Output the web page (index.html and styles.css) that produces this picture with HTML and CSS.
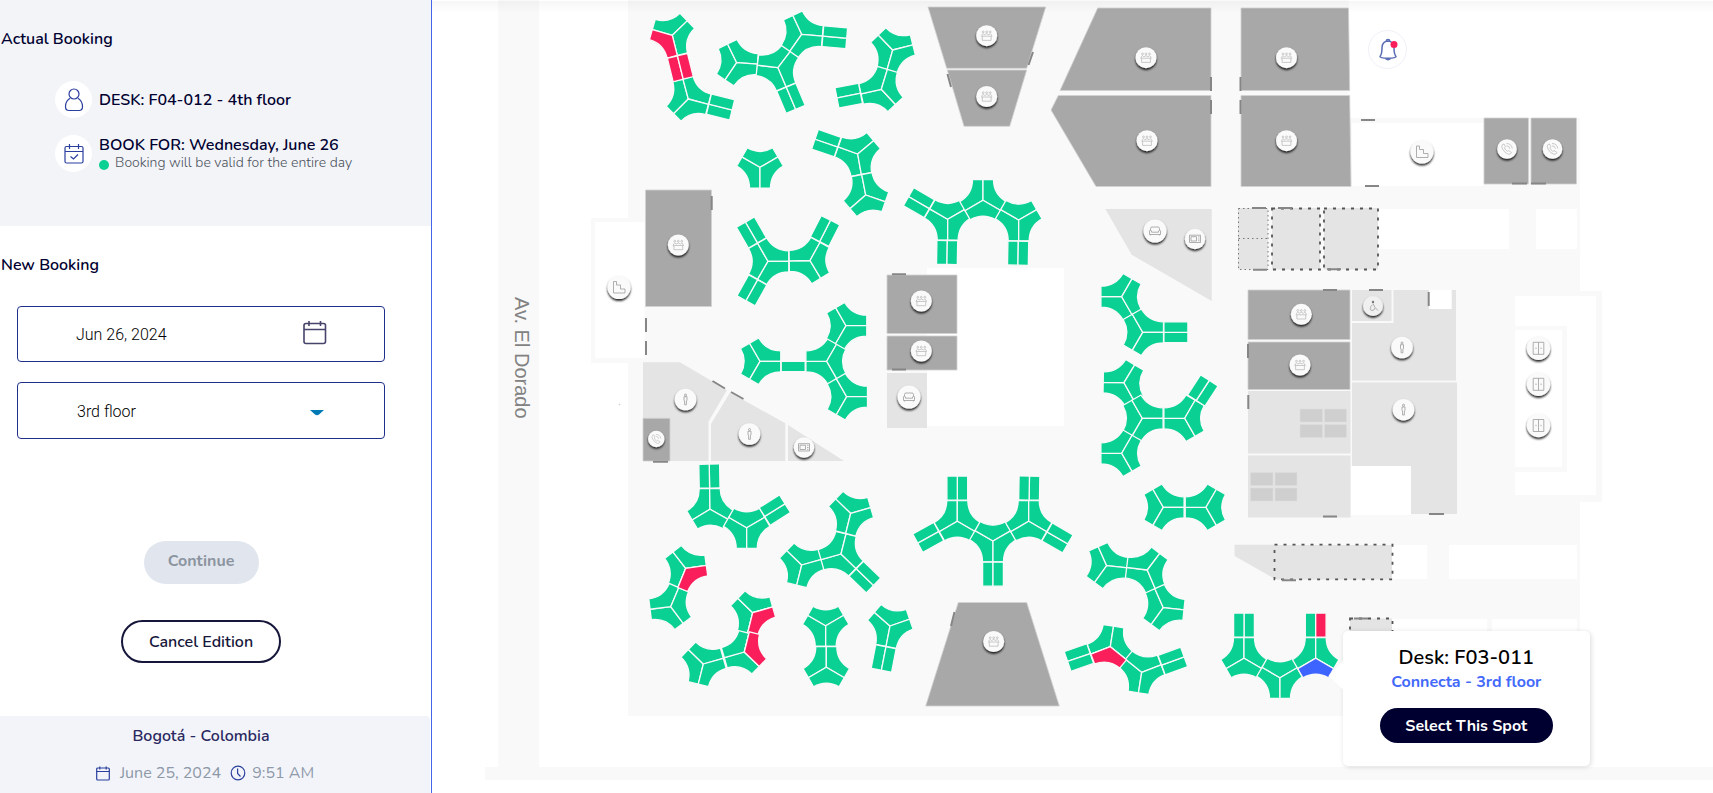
FILE: index.html
```html
<!DOCTYPE html>
<html lang="en">
<head>
<meta charset="utf-8">
<title>Edit booking</title>
<link rel="stylesheet" href="styles.css">
</head>
<body>
<div class="app">
  <aside class="sidebar">
    <section class="actual">
      <h2 class="heading">Actual Booking</h2>
      <div class="info">
        <span class="badge">
          <svg width="20" height="24" viewBox="0 0 20 24" class="line"><circle cx="10" cy="6" r="5"/><path d="M6 10.200C3 12 1.500 14.500 1.500 18.500C1.500 21.500 2.500 22.500 5 22.500H15C17.500 22.500 18.500 21.500 18.500 18.500C18.500 14.500 17 12 14 10.200"/></svg>
        </span>
        <p class="info-title">DESK: F04-012 - 4th floor</p>
      </div>
      <div class="info">
        <span class="badge">
          <svg width="20" height="20" viewBox="0 0 20 20" class="line"><rect x="1" y="2.500" width="18" height="16.500" rx="1.500"/><path d="M1 7.500H19M5.500 0V5M14.500 0V5M6.500 12.500L9.500 15L14 10.500"/></svg>
        </span>
        <div>
          <p class="info-title">BOOK FOR: Wednesday, June 26</p>
          <p class="info-note"><i class="dot"></i>Booking will be valid for the entire day</p>
        </div>
      </div>
    </section>
    <section class="new">
      <h2 class="heading">New Booking</h2>
      <label class="field">
        <input class="control" type="text" value="Jun 26, 2024" aria-label="Date">
        <svg class="field-icon" width="24" height="24" viewBox="0 0 24 24"><rect x="1" y="2.500" width="21.500" height="20" rx="2"/><path d="M1 8.500H22.500M6 0V5M17.500 0V5"/></svg>
      </label>
      <label class="field">
        <select class="control" aria-label="Floor"><option>3rd floor</option></select>
        <svg class="field-arrow" width="14" height="6" viewBox="0 0 14 6"><path d="M0 0H14L9 4.500Q7 6 5 4.500Z"/></svg>
      </label>
      <div class="actions">
        <button class="btn btn-disabled" type="button" disabled>Continue</button>
        <button class="btn btn-outline" type="button">Cancel Edition</button>
      </div>
    </section>
    <footer class="footer">
      <p class="city">Bogotá - Colombia</p>
      <p class="when">
        <svg width="14" height="15" viewBox="0 0 14 15" class="line"><rect x=".7" y="2" width="12.600" height="12" rx="1"/><path d="M.7 5.500H13.300M3.800 0.500V3.500M10.200 .5V3.500"/></svg>
        <span class="date">June 25, 2024</span>
        <svg width="16" height="16" viewBox="0 0 16 16" class="line"><circle cx="8" cy="8" r="6.800"/><path d="M7.600 3.500V8.500L10.500 11.500"/></svg>
        <span>9:51 AM</span>
      </p>
    </footer>
  </aside>

  <main class="map">
    <svg class="plan" viewBox="432 0 1281 793">
      <defs>
        <filter id="lift" x="-40%" y="-40%" width="180%" height="190%"><feDropShadow dx="0" dy="1.800" stdDeviation="1.200" flood-color="#000" flood-opacity=".9"/></filter>
        <linearGradient id="fade" x1="0" y1="0" x2="0" y2="1"><stop offset="0" stop-opacity=".035"/><stop offset="1" stop-opacity="0"/></linearGradient>
        <path id="w" d="M0 0V20.800H-10.500Q-10.500 6.060 -23.260 -1.310L-18.010 -10.400Z"/>
        <g id="h"><use href="#w"/><use href="#w" transform="rotate(120)"/><use href="#w" transform="rotate(240)"/></g>
        <path id="s" d="M-10.400 21.200H0V45.200H-10.400Z"/>
        <g id="b"><use href="#s"/><path d="M0 21.200H10.400V45.200H0Z"/></g>
        <g id="meet"><circle class="pin" r="10.500"/><g class="ink"><circle cx="-3.500" cy="-3.800" r=".9"/><circle cy="-3.800" r=".9"/><circle cx="3.500" cy="-3.800" r=".9"/><path d="M-4.800 0V-1Q-3.500 -3 -2.200 -1Q0 -3 2.200 -1Q3.500 -3 4.800 -1V0M-5.600 .5H5.600M-4.400 .5V4.700H4.400V.5"/></g></g>
        <g id="stairs"><circle class="pin" r="11.500"/><path class="ink dark" d="M-5.500 -6H-2.500V-2.500H1.500V1.500H6V5.500H-5.500Z"/></g>
        <g id="phone"><circle class="pin" r="9.800"/><path class="ink" d="M-4.500 -4.500Q-6 -3 -4.500 0Q-2 4.500 1.500 5.300Q3.500 5.500 4.500 3.500L1.500 1.500L.3 2.500Q-1.800 1 -2.600 -1.200L-1.500 -2.200L-3 -5ZM-.5 -5.500Q4.500 -5.500 5.300 -.5M-.5 -3.200Q2.500 -3 3 -.2"/></g>
        <g id="sofa"><circle class="pin" r="11.500"/><path class="ink dark" d="M-4.500 -.8V-2.500Q-4.500 -4 -3 -4H3Q4.500 -4 4.500 -2.500V-.8M-3.500 1.200V0Q-4 -1 -5 -.8Q-6.200 -.3 -5.500 1V3.500H5.500V1Q6.200 -.3 5 -.8Q4 -1 3.500 0V1.200ZM-4.500 3.500V4.500M4.500 3.500V4.500"/></g>
        <g id="micro"><circle class="pin" r="10.200"/><path class="ink dark" d="M-5.500 -3.800H5.500V3.500H-5.500ZM-4 -2.300H1.500V2H-4ZM3 -2.200H4.500M3 0H4.500M3 1.800H4.500"/></g>
        <g id="wc"><circle class="pin" r="10.800"/><path class="ink dark" d="M0 -5.500A1 1 0 1 1 0 -3.500A1 1 0 1 1 0 -5.500M-1.500 -2.800H1.500V1L.9 1.300V5.300H-.9V1.300L-1.500 1Z"/></g>
        <g id="access"><circle class="pin grey" r="10"/><circle cy="-4" r="1.200" fill="#777"/><path class="ink dark" d="M0 -2.500L2 1.500L5 4.500M-.5 -1L-2.500 .5M-2 1Q-4 4 -1 4.500Q1.500 4.500 2 2"/></g>
        <g id="elev"><circle class="pin" r="11.700"/><path class="ink dark" d="M-5.300 -6H5.300V6H-5.300ZM0 -6V6M-2.500 -.7V.7M2.500 -.7V.7"/></g>
      </defs>

      <!-- ground -->
      <path class="floor" d="M498 0H539V767H1713V780H485V767H498Z"/>
      <path class="floor" d="M628 0H1349V118H1580V291H1602V502H1580V716H628ZM591 218H645V363H591Z"/>
      <path class="void" d="M595 222H644.500V358H595ZM927 268H1064V426H927ZM1352 123H1483V186H1352ZM1378 209H1509V249H1378ZM1536 209H1577V249H1536ZM1515 296H1596V495H1515ZM1392 545H1427V579H1392ZM1449 545H1577V579H1449ZM1392 619H1487V716H1392ZM1492 619H1577V716H1492Z"/>
      <path class="floor" d="M1515 326H1567V472H1515Z"/>
      <path class="void" d="M1515 330H1562V467H1515Z"/>
      <circle cx="619.500" cy="404.500" r=".8" fill="#ccc"/>
      <text class="street" transform="translate(514.500 297) rotate(90)">Av. El Dorado</text>

      <!-- meeting rooms -->
      <g class="room">
        <path d="M928 7H1045.700L1026.700 68.300H946.700ZM947.300 70H1026.700L1009.700 126.300H964Z"/>
        <path d="M1097.700 8H1211V90.500H1060ZM1058.300 95.500H1211V186.500H1096L1051 110Z"/>
        <path d="M1241 8H1348.500L1349.700 90.500H1241ZM1241 95.500H1349.700L1351 186.500H1241Z"/>
        <path d="M1484 118H1528.500V184H1484ZM1531 118H1576.500V184H1531Z"/>
        <path d="M645.500 190H711.500V306.500H645.500ZM887 275H957V333.500H887ZM887 336H957V370H887Z"/>
        <path d="M958.300 602.500H1026.700L1059.300 706H925.700ZM1248 290H1350V339.500H1248ZM1248 342H1350V389.500H1248Z"/>
      </g>
      <g class="area">
        <path d="M1105.300 209H1211.700V301L1131.700 254.700ZM887 373H927V428H887Z"/>
        <path d="M643 362.300H680L727 390L708.500 421.500V461H643ZM730 392.500L785.300 423.300V461H711V424ZM788 425L844 461H788Z"/>
        <path d="M1248 391H1350.500V453.500H1248ZM1248 455.500H1350.500V517.500H1248Z"/>
        <path d="M1352 290H1391.500V321H1352ZM1393.500 290H1429V309H1451.500V290H1456V380.500H1352V323H1393.500ZM1352 382.500H1457V514H1411V466H1352Z"/>
        <path d="M1234.600 544.700H1275V579L1234.600 556Z"/>
        <path d="M1238 208H1268V269.500H1238ZM1272 208H1320V269.500H1272ZM1324 208H1378V269.500H1324ZM1275 545H1392V579.500H1275ZM1350 618.500H1392V640H1350Z"/>
      </g>
      <path class="void" d="M1351 466H1411V515H1351ZM1429 290H1451.500V309H1429Z"/>
      <path class="room" d="M643 418.300H670V461H643Z"/>
      <path class="table" d="M1300 409H1322.500V422H1300ZM1324.500 409H1346.500V422H1324.500ZM1300 424.500H1322.500V437.500H1300ZM1324.500 424.500H1346.500V437.500H1324.500ZM1250.500 472.500H1273V485.500H1250.500ZM1275 472.500H1297V485.500H1275ZM1250.500 488H1273V501H1250.500ZM1275 488H1297V501H1275Z"/>
      <path class="dots fine" d="M1238.500 208.500H1268V269.500H1238.500ZM1238.500 238.500H1268"/>
      <path class="dots" d="M1272 208.500H1320V269.500H1272ZM1324 208.500H1378V269.500H1324ZM1274.500 544.700H1392.500V579.300H1274.500ZM1350 618.500H1392.500V640H1350Z"/>
      <path class="door" d="M1033 52L1028.500 65M947.500 74L951 87M1211 77V91M1211 100V114M1240.500 77V91M1240.500 100V114M1361 120H1375M1365 186H1379M1512 183.500H1527M1531 183.500H1546M1252 208H1266M1278 208H1292M1253 269.700H1267M1327 269.300H1341M711.700 196V210M646 318V332M646 341V355M712.500 381L725 388.500M731 392L743.500 399M653 461.700H668M892 274.300H906M892 369.500H906M954.500 612L951 626M1323 290H1337M1369 290H1383M1428.700 292V306M1248 344V358M1248.300 395V409M1323 516.500H1337M1429 514H1444M1282 580.300H1296M1354 618.500H1368"/>

      <!-- desks -->
      <g class="desk">
        <use href="#h" transform="translate(672.300 35.300) rotate(-14)"/><use href="#h" transform="translate(688.300 99) rotate(45)"/><use href="#b" transform="translate(688.300 99) rotate(-76)"/>
        <use href="#h" transform="translate(736.700 62.700) rotate(34)"/><use href="#h" transform="translate(778 67.700) rotate(-23)"/><use href="#h" transform="translate(801.700 34.300) rotate(35)"/><use href="#b" transform="translate(801.700 34.300) rotate(-85)"/><use href="#b" transform="translate(778 67.700) rotate(-23)"/>
        <use href="#h" transform="translate(892.700 50) rotate(16)"/><use href="#h" transform="translate(881.300 89.300) rotate(-43)"/><use href="#b" transform="translate(881.300 89.300) rotate(79)"/>
        <use href="#h" transform="translate(760 167.300)"/>
        <use href="#h" transform="translate(857.700 154) rotate(-10)"/><use href="#h" transform="translate(865.700 195) rotate(49)"/><use href="#b" transform="translate(857.700 154) rotate(109)"/>
        <use href="#h" transform="translate(768 261.300) rotate(30)"/><use href="#h" transform="translate(810 260.500) rotate(-31)"/><use href="#b" transform="translate(768 261.300) rotate(150)"/><use href="#b" transform="translate(768 261.300) rotate(29)"/><use href="#b" transform="translate(810 260.500) rotate(207)"/>
        <use href="#h" transform="translate(760 361.300) rotate(30)"/><use href="#s" transform="translate(760 361.300) rotate(-90)"/><use href="#h" transform="translate(826.700 361.300) rotate(-30)"/><use href="#h" transform="translate(846 325.700) rotate(30)"/><use href="#h" transform="translate(846.700 396.700) rotate(30)"/>
        <use href="#h" transform="translate(710 509.300) rotate(59)"/><use href="#h" transform="translate(746.700 527.700)"/><use href="#b" transform="translate(710 509.300) rotate(179)"/><use href="#b" transform="translate(746.700 527.700) rotate(-122)"/>
        <use href="#h" transform="translate(801.700 565) rotate(14)"/><use href="#h" transform="translate(841 554) rotate(-46)"/><use href="#h" transform="translate(850.700 513.300) rotate(14)"/><use href="#b" transform="translate(841 554) rotate(-46)"/>
        <use href="#h" transform="translate(685.700 568.300) rotate(22)"/><use href="#h" transform="translate(670.700 606.700) rotate(-37)"/>
        <use href="#h" transform="translate(703.300 664) rotate(14)"/><use href="#h" transform="translate(744.300 652) rotate(-46)"/><use href="#h" transform="translate(752.700 612.700) rotate(14)"/>
        <use href="#h" transform="translate(825.700 625.700)"/><use href="#h" transform="translate(826.300 667.300) rotate(60)"/>
        <use href="#h" transform="translate(890 626) rotate(11)"/><use href="#b" transform="translate(890 626) rotate(11)"/>
        <use href="#h" transform="translate(947.700 219.300)"/><use href="#h" transform="translate(983 200.300) rotate(60)"/><use href="#h" transform="translate(1018.700 220)"/><use href="#b" transform="translate(947.700 219.300) rotate(1)"/><use href="#b" transform="translate(1018.700 220) rotate(1)"/><use href="#b" transform="translate(947.700 219.300) rotate(120)"/>
        <use href="#h" transform="translate(1121.700 296.700) rotate(-30)"/><use href="#h" transform="translate(1142.700 332.300) rotate(30)"/><use href="#b" transform="translate(1142.700 332.300) rotate(-90)"/>
        <use href="#h" transform="translate(1124 382.700) rotate(-29)"/><use href="#h" transform="translate(1142.300 418.300) rotate(30)"/><use href="#h" transform="translate(1121.700 453.300) rotate(-30)"/><use href="#h" transform="translate(1184.700 418.300) rotate(-30)"/><use href="#b" transform="translate(1184.700 418.300) rotate(213)"/>
        <use href="#h" transform="translate(1163.300 507.300) rotate(30)"/><use href="#h" transform="translate(1206 507.300) rotate(-30)"/>
        <use href="#h" transform="translate(957.300 521.300) rotate(60)"/><use href="#h" transform="translate(993 541)"/><use href="#h" transform="translate(1028.700 521.300) rotate(60)"/><use href="#b" transform="translate(957.300 521.300) rotate(180)"/><use href="#b" transform="translate(1028.700 521.300) rotate(181)"/><use href="#b" transform="translate(993 541)"/><use href="#b" transform="translate(957.300 521.300) rotate(61)"/><use href="#b" transform="translate(1028.700 521.300) rotate(-60)"/>
        <use href="#h" transform="translate(1106.700 565.700) rotate(36)"/><use href="#h" transform="translate(1147.300 570) rotate(-23)"/><use href="#h" transform="translate(1163.300 607.700) rotate(36)"/>
        <use href="#h" transform="translate(1110.300 646.700) rotate(69)"/><use href="#h" transform="translate(1141.700 672.300) rotate(9)"/><use href="#b" transform="translate(1110.300 646.700) rotate(71)"/><use href="#b" transform="translate(1141.700 672.300) rotate(-110)"/>
        <use href="#h" transform="translate(1244 658.300) rotate(60)"/><use href="#h" transform="translate(1280 677.700)"/><use href="#h" transform="translate(1315.700 658.300) rotate(60)"/><use href="#b" transform="translate(1244 658.300) rotate(180)"/><use href="#b" transform="translate(1315.700 658.300) rotate(180)"/>
      </g>
      <g class="desk taken">
        <use href="#w" transform="translate(672.300 35.300) rotate(-14)"/><use href="#b" transform="translate(672.300 35.300) rotate(-14)"/>
        <use href="#w" transform="translate(685.700 568.300) rotate(-98)"/>
        <use href="#w" transform="translate(752.700 612.700) rotate(-106)"/><use href="#w" transform="translate(744.300 652) rotate(194)"/>
        <use href="#w" transform="translate(1110.300 646.700) rotate(-51)"/>
        <use href="#s" transform="translate(1315.700 658.300) rotate(180)"/>
      </g>
      <use class="desk picked" href="#w" transform="translate(1315.700 658.300) rotate(-60)"/>

      <!-- room pins -->
      <use href="#meet" x="986.700" y="35.700"/><use href="#meet" x="986.700" y="96.500"/><use href="#meet" x="1146" y="57.700"/><use href="#meet" x="1147" y="140.700"/><use href="#meet" x="1286.500" y="57.700"/><use href="#meet" x="1286.500" y="140.700"/><use href="#meet" x="678.300" y="245"/><use href="#meet" x="921.300" y="301"/><use href="#meet" x="921.300" y="351"/><use href="#meet" x="993.700" y="641.500"/><use href="#meet" x="1301.300" y="314.300"/><use href="#meet" x="1300" y="365"/>
      <use href="#stairs" x="1422" y="152"/><use href="#stairs" x="619" y="287.500"/>
      <use href="#phone" x="1507" y="149"/><use href="#phone" x="1552.500" y="149"/><use href="#phone" transform="translate(656.300 439) scale(.84)"/>
      <use href="#sofa" x="1155" y="231"/><use href="#sofa" x="909" y="397"/>
      <use href="#micro" x="1195" y="239"/><use href="#micro" x="804" y="447.500"/>
      <use href="#wc" x="685.500" y="399.500"/><use href="#wc" x="749.500" y="434"/><use href="#wc" x="1402" y="347.500"/><use href="#wc" x="1403.500" y="409.700"/>
      <use href="#access" x="1373" y="306"/>
      <use href="#elev" x="1538.500" y="348.300"/><use href="#elev" x="1538.500" y="384.300"/><use href="#elev" x="1538.500" y="425.500"/>
      <rect x="432" y="1" width="1281" height="12" fill="url(#fade)"/>
    </svg>

    <button class="bell" type="button" aria-label="Notifications">
      <svg width="20" height="24" viewBox="0 0 20 24"><path d="M2 18.500Q4 16 4 10Q4 3.500 10 3Q16 3.500 16 10Q16 16 18 18.500Q18 20 10 20.300Q2 20 2 18.500Z"/><path d="M8.300 3Q8.300 1.500 10 1.500Q11.700 1.500 11.700 3M7.500 20.500Q10 23 12.500 20.500"/><circle cx="16" cy="6.500" r="3.500"/></svg>
    </button>

    <div class="popover">
      <h3 class="popover-title">Desk: F03-011</h3>
      <p class="popover-sub">Connecta - 3rd floor</p>
      <button class="btn-primary" type="button">Select This Spot</button>
    </div>
  </main>
</div>
</body>
</html>
```
FILE: styles.css
```css
* { box-sizing: border-box; margin: 0; }
body { font-family: Nunito, "Open Sans", "Noto Sans", sans-serif; font-size: 16px; line-height: 20px; color: #000030; background: #fff; }
button { font: inherit; }
.app { display: flex; min-height: 100vh; }
.sidebar { flex: 0 0 432px; display: flex; flex-direction: column; border-right: 1px solid #4365ea; }
.actual { height: 226px; padding-top: 29px; background: #f2f4f8; }
.heading { padding-left: 1px; font-size: 16px; font-weight: 600; line-height: 20px; }
.info { display: flex; align-items: center; gap: 7px; padding-left: 55px; margin-top: 17px; }
.heading + .info { margin-top: 32px; }
.badge { display: flex; align-items: center; justify-content: center; width: 37px; height: 37px; border-radius: 50%; background: #fff; }
.line { fill: none; stroke: #2b3f9e; stroke-width: 1.2; }
.info-title { font-weight: 600; line-height: 18px; }
.info-note { display: flex; align-items: center; gap: 6px; font-size: 14px; font-weight: 300; line-height: 18px; color: #4c515c; }
.dot { width: 10px; height: 10px; margin-top: 4px; border-radius: 50%; background: #0ad193; }
.new { padding: 29px 0 40px; }
.field { position: relative; display: block; width: 368px; height: 56px; margin: 20px 0 0 17px; }
.field + .field { height: 57px; }
.heading + .field { margin-top: 31px; }
.control { width: 100%; height: 100%; padding: 0 58px; border: 1px solid #1f2f8c; border-radius: 4px; appearance: none; background: #fff; font: 300 16px Roboto, sans-serif; color: #000; }
select.control { padding: 1px 59px 0; }
.field-icon { position: absolute; right: 58px; top: 15px; fill: none; stroke: #46446a; stroke-width: 1.6; }
.field-arrow { position: absolute; right: 61px; top: 28px; fill: #0079b4; }
.actions { display: flex; flex-direction: column; align-items: center; gap: 36px; width: 402px; margin-top: 102px; }
.btn { height: 43px; border-radius: 22px; font-weight: 600; }
.btn-disabled { width: 115px; padding: 0 0 4px; border: 0; background: #e1e5ed; color: #8b949f; font-weight: 700; }
.btn-outline { width: 160px; padding: 0; border: 2px solid #16163a; background: #fff; color: #16163a; }
.footer { width: 430px; margin-top: auto; padding: 10px 28px 10px 0; border-radius: 0 4px 0 0; background: #f3f4f9; text-align: center; }
.city { font-weight: 600; color: #2a2860; }
.when { display: flex; align-items: center; justify-content: center; gap: 6px; margin-top: 17px; padding-left: 8px; color: #8d98a8; }
.date { padding: 0 3px 0 4px; }

.map { position: relative; flex: 1; min-width: 0; align-self: flex-start; }
.plan { display: block; width: 100%; }
.floor { fill: #f9f9f9; }
.void { fill: #fff; }
.room { fill: #a8a8a8; stroke: #d2d2d2; stroke-width: .8; }
.area { fill: #e4e4e4; }
.table { fill: #cfcfcf; stroke: #dcdcdc; stroke-width: .5; }
.dots { fill: none; stroke: #555; stroke-width: 1.8; stroke-dasharray: 3 6; }
.fine { stroke: #777; stroke-width: 1; stroke-dasharray: 1.5 3; }
.door { fill: none; stroke: #868686; stroke-width: 2; }
.street { font: 20px "Liberation Sans", sans-serif; fill: #828282; }
.desk { fill: #0ad193; stroke: #f9f9f9; stroke-width: 1.3; }
.taken { fill: #fa1e5b; }
.picked { fill: #3e64ff; }
.pin { fill: #fafafa; stroke: none; filter: url(#lift); }
.grey { fill: #f0f0f0; }
.ink { fill: none; stroke: #bdbdbd; stroke-width: .8; }
.dark { stroke: #9c9c9c; }

.bell { position: absolute; left: 73.1%; top: 3.8%; width: 39px; height: 39px; padding: 0; display: flex; align-items: center; justify-content: center; border: 1px solid #f0f1f9; border-radius: 50%; background: #fff; }
.bell path { fill: none; stroke: #5a6cb4; stroke-width: 1.5; }
.bell circle { fill: #fa1e5b; }
.popover { position: absolute; left: 71.1%; top: 79.6%; width: 247px; height: 135px; display: flex; flex-direction: column; align-items: center; padding-top: 13px; border-radius: 5px; background: #fff; box-shadow: 1px 1px 5px rgba(0, 0, 0, .15); }
.popover::before { content: ""; position: absolute; left: -10px; top: 34px; width: 21px; height: 21px; background: #fff; transform: rotate(45deg); }
.popover-title { position: relative; font-size: 20px; font-weight: 600; line-height: 28px; color: #000; }
.popover-sub { position: relative; font-weight: 700; line-height: 20px; color: #4369fa; }
.btn-primary { width: 173px; height: 35px; margin-top: 16px; padding: 0; border: 0; border-radius: 18px; background: #000030; color: #fff; font-weight: 700; }
```
